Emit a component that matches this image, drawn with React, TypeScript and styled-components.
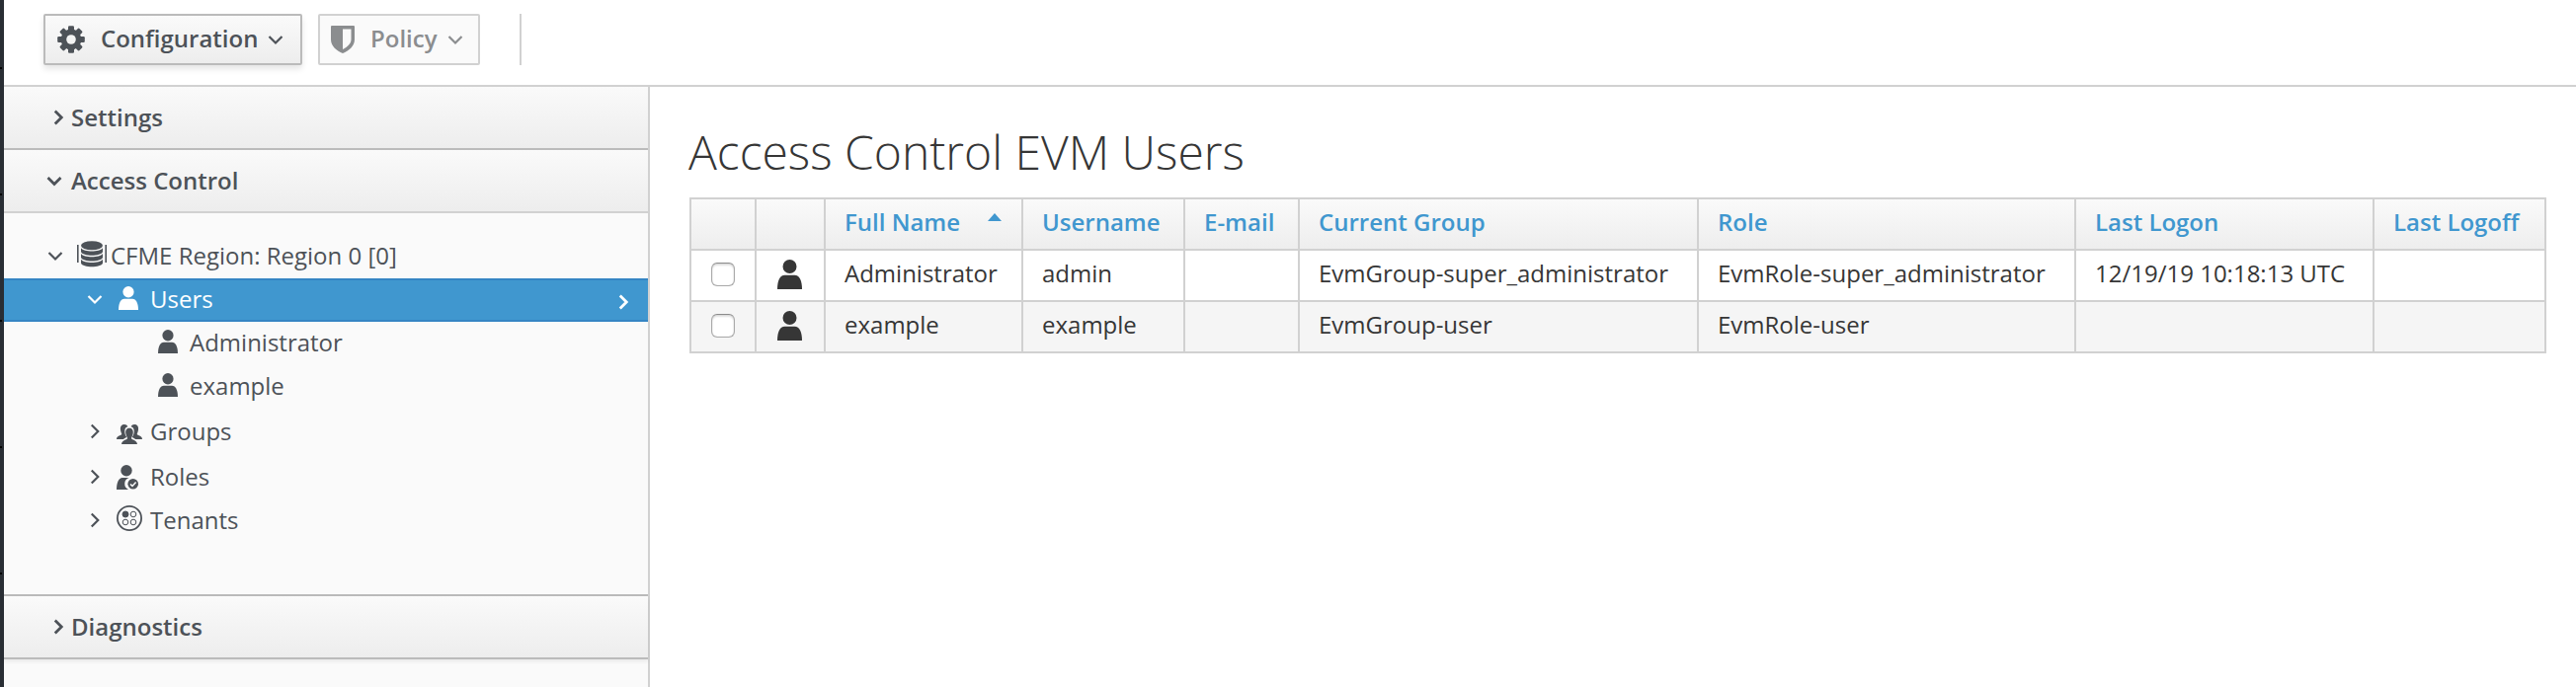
import React from 'react';
import styled, { createGlobalStyle, css } from 'styled-components';

const GlobalStyle = createGlobalStyle`
  *, *::before, *::after { box-sizing: border-box; }
  body { margin: 0; background: #fff; }
`;

const Page = styled.div`
  display: flex;
  height: 696px;
  overflow: hidden;
  font-family: "Open Sans", sans-serif;
  font-size: 24px;
  line-height: 40px;
  color: #363636;
  background: #fff;
`;

const NavEdge = styled.div`
  flex: none;
  width: 4px;
  display: flex;
  flex-direction: column;
  gap: 126px;
  padding-top: 68px;
  background: #292e34;
`;

const NavDivider = styled.span`
  flex: none;
  width: 2px;
  height: 2px;
  background: #030303;
`;

const Shell = styled.div`
  flex: 1;
  display: flex;
  flex-direction: column;
  min-width: 0;
`;

const Toolbar = styled.header`
  flex: none;
  display: flex;
  align-items: flex-start;
  height: 88px;
  padding: 14px 0 0 40px;
  border-bottom: 2px solid #d1d1d1;
`;

const ToolbarButton = styled.button<{ $width: number }>`
  display: flex;
  align-items: center;
  width: ${(p) => p.$width}px;
  height: 52px;
  margin: 0 16px 0 0;
  padding: 0 0 0 12px;
  font: 600 24px/40px "Open Sans", sans-serif;
  color: #4d5258;
  border: 2px solid #bbb;
  border-radius: 2px;
  background: linear-gradient(#fafafa, #ededed);
  box-shadow: 0 4px 6px rgba(3, 3, 3, 0.1);

  &:disabled {
    padding-left: 11px;
    color: #8b8d8f;
    border-color: #d1d1d1;
    background: #fafafa;
    box-shadow: none;
  }
`;

const ButtonLabel = styled.span`
  margin: -2px 10px 0 16px;
`;

const ToolbarDivider = styled.span`
  width: 2px;
  height: 52px;
  margin-left: 24px;
  background: #d1d1d1;
`;

const Body = styled.div`
  flex: 1;
  display: flex;
  min-height: 0;
`;

const Sidebar = styled.aside`
  flex: none;
  width: 654px;
  border-right: 2px solid #d1d1d1;
  background: #fafafa;
  color: #4d5258;
`;

const AccordionHeader = styled.div<{ $open?: boolean; $last?: boolean }>`
  display: flex;
  align-items: center;
  height: 64px;
  padding: 0 0 0 43px;
  font-weight: 600;
  border-bottom: 2px solid ${(p) => (p.$open ? '#d1d1d1' : '#bbb')};
  background: linear-gradient(#fafafa, #ededed);
  ${(p) => p.$last && css`box-shadow: 0 2px 4px rgba(3, 3, 3, 0.08);`}
`;

const AccordionArrow = styled.span<{ $closed?: boolean }>`
  display: flex;
  width: 25px;
  padding-left: ${(p) => (p.$closed ? 3.5 : 0)}px;
`;

const Tree = styled.ul`
  height: 388px;
  margin: 0;
  padding: 22px 0 0;
  list-style: none;
  border-bottom: 2px solid #bbb;
`;

const TreeRow = styled.li<{ $level: number; $selected?: boolean; $spaced?: boolean }>`
  display: flex;
  align-items: center;
  height: 44px;
  margin-top: ${(p) => (p.$spaced ? 2 : 0)}px;
  padding: 0 0 2px ${(p) => 44 + p.$level * 40}px;
  border: solid transparent;
  border-width: 2px 0;
  ${(p) => p.$selected && css`
    color: #fff;
    background: #4097cf;
    border-color: #3585c4;
  `}
`;

const TreeToggle = styled.span`
  display: flex;
  width: 30px;
`;

const TreeIcon = styled.span<{ $indent: number; $lift: number }>`
  display: flex;
  width: 34px;
  height: 26px;
  align-items: center;
  padding-left: ${(p) => p.$indent}px;
  margin-bottom: ${(p) => p.$lift * 2}px;
`;

const SelectedArrow = styled.span`
  display: flex;
  margin: 6px 17px 0 auto;
`;

const Content = styled.main`
  flex: 1;
  padding: 33px 30px 0 40px;
`;

const Title = styled.h1`
  margin: 0 0 13px -1px;
  font-size: 48px;
  font-weight: 300;
  line-height: 66px;
`;

const Table = styled.table`
  width: 1880px;
  table-layout: fixed;
  border-collapse: separate;
  border-spacing: 0;
  border: solid #d1d1d1;
  border-width: 2px 0 0 2px;
`;

const cell = css`
  height: 52px;
  padding: 0 0 4px 19px;
  text-align: left;
  line-height: 40px;
  white-space: nowrap;
  border: solid #d1d1d1;
  border-width: 0 2px 2px 0;
`;

const HeadRow = styled.tr`
  background: linear-gradient(#fafafa, #ededed);
`;

const Th = styled.th`
  ${cell}
  font-weight: 600;
  color: #4097cf;
  background-clip: padding-box;
`;

const Row = styled.tr`
  &:nth-child(even) { background: #f5f5f5; }
`;

const Td = styled.td`
  ${cell}
`;

const IconCell = styled(Td)<{ $indent: number }>`
  padding: 0 0 2px ${(p) => p.$indent}px;
  line-height: 0;
`;

const SortMark = styled.span`
  display: inline-block;
  margin: 0 0 10px 28px;
  border: solid transparent;
  border-width: 0 7px 8px;
  border-bottom-color: #4097cf;
`;

const Checkbox = styled.input`
  appearance: none;
  display: block;
  width: 24px;
  height: 24px;
  margin: 0;
  border: 1px solid #aaa;
  border-top-color: #8c8c8c;
  border-radius: 6px;
  background: #fff;
  box-shadow: inset 0 2px 2px rgba(0, 0, 0, 0.12), inset 0 0 1px rgba(0, 0, 0, 0.3);
`;

const Chevron = ({ down, bold }: { down?: boolean; bold?: boolean }) => (
  <svg width="16" height="18" viewBox="0 0 16 18" fill="none" stroke="currentColor" strokeWidth={bold ? 2.8 : 2.2}>
    <path d={down ? 'M1.5 6 8 12.5 14.5 6' : 'M4.75 2.5 11.25 9 4.75 15.5'} />
  </svg>
);

const GearIcon = () => (
  <svg width="28" height="28" viewBox="-14 -14 28 28" fill="currentColor">
    <mask id="hub" maskUnits="userSpaceOnUse" x="-14" y="-14" width="28" height="28">
      <rect x="-14" y="-14" width="28" height="28" fill="#fff" />
      <circle r="4.8" fill="#000" />
    </mask>
    <g mask="url(#hub)">
      {[0, 45, 90, 135].map((a) => (
        <rect key={a} x="-3" y="-13.800" width="6" height="27.600" rx="1.200" transform={`rotate(${a})`} />
      ))}
      <circle r="10.400" />
    </g>
  </svg>
);

const ShieldIcon = () => (
  <svg width="24" height="28" viewBox="0 0 24 28" fill="currentColor">
    <path fillRule="evenodd" d="M1 0H23Q24 0 24 1V14C24 21 18 25.500 12 28C6 25.500 0 21 0 14V1Q0 0 1 0ZM12 3.500V24C17 21.500 20.500 18 20.500 14V3.500Z" />
  </svg>
);

const UserIcon = ({ tall }: { tall?: boolean }) => (
  <svg width={tall ? 25 : 20} height={tall ? 30 : 24.5} viewBox="0 0 20 24" preserveAspectRatio="none" fill="currentColor">
    <circle cx="10" cy="5.600" r="5.600" />
    <path d="M0 24C0 17 2 12.500 6 12.500H14C18 12.500 20 17 20 24Z" />
  </svg>
);

const RegionIcon = () => (
  <svg width="30" height="27" viewBox="0 0 30 27" fill="currentColor">
    <rect x="0" y="4" width="1.600" height="18" />
    <rect x="28.400" y="4" width="1.600" height="18" />
    <ellipse cx="15" cy="4.700" rx="11" ry="4.500" />
    {[0, 5.8, 11.6].map((y) => (
      <path key={y} transform={`translate(0 ${y})`} d="M4 7.200C7 11.500 23 11.500 26 7.200V11C24.500 16 5.500 16 4 11Z" />
    ))}
  </svg>
);

const GroupIcon = () => (
  <svg width="26" height="20" viewBox="0 0 26 20" fill="currentColor">
    <path d="M8 0C4.500 0 3.600 2.500 4 5.500C4.200 7.500 5 8.500 5.300 10C4 11.500 0 11.500 0 15H7C8 13.800 9.500 13.500 10.300 13C9 11 8 9 8.300 6C8.500 4 9.500 3 11.400 2.300C11 1 10 0 8 0Z" />
    <path d="M18 0C21.500 0 22.400 2.500 22 5.500C21.800 7.500 21 8.500 20.700 10C22 11.500 26 11.500 26 15H19C18 13.800 16.500 13.500 15.700 13C17 11 18 9 17.700 6C17.500 4 16.500 3 14.600 2.300C15 1 16 0 18 0Z" />
    <path d="M13 3.800C9.700 3.800 9 6.500 9.300 9C9.500 11.300 10.800 12.500 11 14C10.500 16 5.500 15.500 5 20H21C20.500 15.500 15.500 16 15 14C15.200 12.500 16.500 11.300 16.700 9C17 6.500 16.300 3.800 13 3.800Z" />
  </svg>
);

const RoleIcon = () => (
  <svg width="22" height="25" viewBox="0 0 22 25" fill="currentColor">
    <circle cx="10" cy="5.700" r="5.700" />
    <path d="M0 25C0 18 2 13 6 13H12.500A6.500 6.500 0 0 0 12 25Z" />
    <circle cx="16.700" cy="19.300" r="5.300" />
    <path d="M14 19.500 16 21.400 19.600 17.600" fill="none" stroke="#fafafa" strokeWidth="1.500" />
  </svg>
);

const TenantIcon = () => (
  <svg width="26" height="26" viewBox="0 0 26 26" fill="none" stroke="currentColor">
    <circle cx="13" cy="13" r="12.100" strokeWidth="1.800" />
    <circle cx="9" cy="9" r="3" fill="currentColor" strokeWidth="1" />
    <circle cx="17" cy="9" r="2.800" strokeWidth="1" />
    <circle cx="9" cy="17" r="2.800" strokeWidth="1" />
    <circle cx="17" cy="17" r="2.800" strokeWidth="1" />
  </svg>
);

const columns: [string, number][] = [
  ['', 66], ['', 70], ['Full Name', 200], ['Username', 164], ['E-mail', 116],
  ['Current Group', 404], ['Role', 382], ['Last Logon', 302], ['Last Logoff', 174],
];

const users = [
  ['Administrator', 'admin', '', 'EvmGroup-super_administrator', 'EvmRole-super_administrator', '12/19/19 10:18:13 UTC', ''],
  ['example', 'example', '', 'EvmGroup-user', 'EvmRole-user', '', ''],
];

type Node = {
  label: string;
  level: number;
  icon: React.ReactNode;
  indent?: number;
  lift?: number;
  toggle?: 'open' | 'closed';
  selected?: boolean;
  spaced?: boolean;
};

const nodes: Node[] = [
  { label: 'CFME Region: Region 0 [0]', level: 0, icon: <RegionIcon />, lift: 2, toggle: 'open' },
  { label: 'Users', level: 1, icon: <UserIcon />, indent: 2, lift: 1, toggle: 'open', selected: true },
  { label: 'Administrator', level: 2, icon: <UserIcon />, indent: 2, lift: 1 },
  { label: 'example', level: 2, icon: <UserIcon />, indent: 2, lift: 1 },
  { label: 'Groups', level: 1, icon: <GroupIcon />, lift: -3, toggle: 'closed', spaced: true },
  { label: 'Roles', level: 1, icon: <RoleIcon />, toggle: 'closed', spaced: true },
  { label: 'Tenants', level: 1, icon: <TenantIcon />, lift: 2, toggle: 'closed' },
];

export default function App() {
  return (
    <Page>
      <GlobalStyle />
      <NavEdge>
        {[0, 1, 2, 3, 4].map((i) => <NavDivider key={i} />)}
      </NavEdge>
      <Shell>
        <Toolbar>
          <ToolbarButton $width={262}>
            <GearIcon />
            <ButtonLabel>Configuration</ButtonLabel>
            <Chevron down />
          </ToolbarButton>
          <ToolbarButton $width={164} disabled>
            <ShieldIcon />
            <ButtonLabel>Policy</ButtonLabel>
            <Chevron down />
          </ToolbarButton>
          <ToolbarDivider />
        </Toolbar>
        <Body>
          <Sidebar>
            <AccordionHeader>
              <AccordionArrow $closed><Chevron bold /></AccordionArrow>Settings
            </AccordionHeader>
            <AccordionHeader $open>
              <AccordionArrow><Chevron down bold /></AccordionArrow>Access Control
            </AccordionHeader>
            <Tree>
              {nodes.map((n) => (
                <TreeRow key={n.label} $level={n.level} $selected={n.selected} $spaced={n.spaced}>
                  <TreeToggle>{n.toggle && <Chevron down={n.toggle === 'open'} />}</TreeToggle>
                  <TreeIcon $indent={n.indent ?? 0} $lift={n.lift ?? 0}>{n.icon}</TreeIcon>
                  {n.label}
                  {n.selected && <SelectedArrow><Chevron bold /></SelectedArrow>}
                </TreeRow>
              ))}
            </Tree>
            <AccordionHeader $last>
              <AccordionArrow $closed><Chevron bold /></AccordionArrow>Diagnostics
            </AccordionHeader>
          </Sidebar>
          <Content>
            <Title>Access Control EVM Users</Title>
            <Table>
              <colgroup>
                {columns.map(([, w], i) => <col key={i} width={w} />)}
              </colgroup>
              <thead>
                <HeadRow>
                  {columns.map(([name], i) => (
                    <Th key={i}>{name}{name === 'Full Name' && <SortMark />}</Th>
                  ))}
                </HeadRow>
              </thead>
              <tbody>
                {users.map((user) => (
                  <Row key={user[0]}>
                    <IconCell $indent={20}><Checkbox type="checkbox" /></IconCell>
                    <IconCell $indent={21}><UserIcon tall /></IconCell>
                    {user.map((value, i) => <Td key={i}>{value}</Td>)}
                  </Row>
                ))}
              </tbody>
            </Table>
          </Content>
        </Body>
      </Shell>
    </Page>
  );
}
